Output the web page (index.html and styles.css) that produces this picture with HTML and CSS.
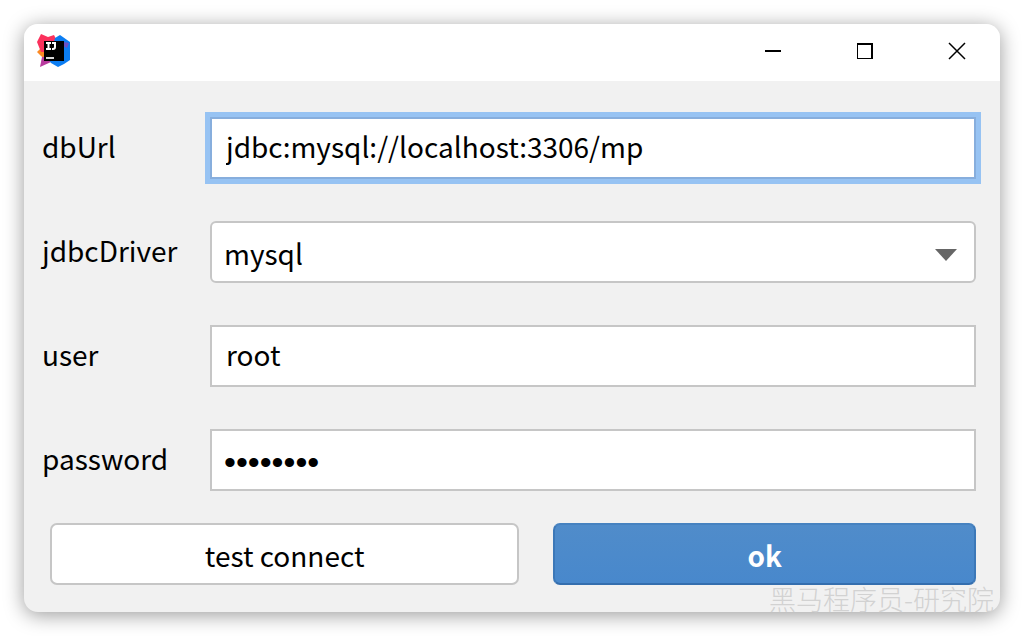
FILE: index.html
```html
<!DOCTYPE html>
<html lang="en">
<head>
<meta charset="utf-8">
<meta name="viewport" content="width=device-width, initial-scale=1">
<title>Database connection</title>
<link rel="stylesheet" href="styles.css">
</head>
<body>
<main class="dialog">
  <header class="titlebar">
    <svg class="app-icon" viewBox="0 0 34 34" aria-hidden="true">
      <path fill="#fc8a24" d="M5 13 0 18l4 4 5 4V14z"/>
      <path fill="#b83b9e" d="M5 23 3 33l11-5 3-6z"/>
      <path fill="#fb315c" d="M4 0 0 8l4 10h12l4-11-3-6-6 2z"/>
      <path fill="#0b7df2" d="m23 1 10 7v18l-6 4-6 3-7-4-2-3 6-22z"/>
      <path fill="#6a52c4" d="m27 8 5 1-2 5-4-2z"/>
      <path fill="#000" d="M7 7h20v20H7z"/>
      <path fill="none" stroke="#fff" stroke-width="2" d="M9 9h5M11.500 9v6M9 15h5M15 9h4M18 9v4q0 2-2 2h-1"/>
      <path fill="#d8d8d8" d="M9 23h8v2H9z"/>
    </svg>
    <div class="window-controls">
      <button class="window-button" type="button" aria-label="Minimize"><svg viewBox="0 0 18 18"><path fill="none" stroke="#000" stroke-width="2" d="M1 9h16"/></svg></button>
      <button class="window-button" type="button" aria-label="Maximize"><svg viewBox="0 0 18 18"><path fill="#000" fill-rule="evenodd" d="M1 1h16v16H1zM2 3v13h13V3z"/></svg></button>
      <button class="window-button" type="button" aria-label="Close"><svg viewBox="0 0 18 18"><path fill="none" stroke="#000" stroke-width="1.500" d="m1 1 16 16M17 1 1 17"/></svg></button>
    </div>
  </header>
  <form class="form">
    <div class="fields">
      <label class="label" for="db-url">dbUrl</label>
      <input class="field field-active" id="db-url" type="text" value="jdbc:mysql://localhost:3306/mp" spellcheck="false">
      <label class="label" for="driver">jdbcDriver</label>
      <div class="select-wrap">
        <select class="field field-select" id="driver"><option>mysql</option></select>
        <svg class="arrow" viewBox="0 0 22 12" aria-hidden="true"><path fill="#666" d="M0 0h22L11 12z"/></svg>
      </div>
      <label class="label" for="user">user</label>
      <input class="field" id="user" type="text" value="root" spellcheck="false">
      <label class="label" for="password">password</label>
      <input class="field field-password" id="password" type="password" value="password">
    </div>
    <div class="actions">
      <button class="button button-test" type="button">test connect</button>
      <button class="button button-ok" type="submit">ok</button>
    </div>
  </form>
  <span class="watermark" lang="zh">黑马程序员-研究院</span>
</main>
</body>
</html>
```
FILE: styles.css
```css
* {
  box-sizing: border-box;
}

body {
  margin: 0;
  padding: 24px;
  background: #fff;
  color: #000;
  font-family: "Noto Sans CJK SC", "Noto Sans", sans-serif;
  font-size: 28px;
  line-height: 42px;
}

.dialog {
  position: relative;
  border-radius: 14px;
  background: #f1f1f1;
  box-shadow: 0 3px 20px rgba(0, 0, 0, 0.4);
}

.titlebar {
  display: flex;
  align-items: center;
  justify-content: space-between;
  height: 57px;
  padding: 0 26px 4px 13px;
  border-radius: 14px 14px 0 0;
  background: #fff;
}

.app-icon {
  width: 34px;
  height: 34px;
}

.window-controls {
  display: flex;
  gap: 58px;
}

.window-button {
  display: flex;
  padding: 8px;
  border: 0;
  background: none;
}

.window-button svg {
  width: 18px;
  height: 18px;
}

.form {
  padding: 36px 24px 27px 18px;
}

.fields {
  display: grid;
  grid-template-columns: 168px 1fr;
  row-gap: 42px;
  align-items: center;
}

.label {
  padding-bottom: 4px;
}

.field {
  display: block;
  width: 100%;
  height: 62px;
  padding: 0 14px 4px;
  border: 2px solid #c6c6c6;
  border-radius: 0;
  outline: 0;
  background: #fff;
  color: #000;
  font: inherit;
}

.field-active {
  border-color: #87aedd;
  box-shadow: 0 0 0 5px #97c3f3;
}

.field-password {
  padding: 4px 12px 0;
  font-family: "Liberation Sans", Arial, sans-serif;
  font-size: 34px;
}

.select-wrap {
  position: relative;
}

.field-select {
  appearance: none;
  padding: 2px 12px 0;
  border-radius: 6px;
}

.arrow {
  position: absolute;
  top: 28px;
  right: 19px;
  width: 22px;
  height: 12px;
  pointer-events: none;
}

.actions {
  display: flex;
  gap: 34px;
  margin-top: 32px;
  padding-left: 8px;
}

.button {
  height: 62px;
  padding: 2px 0 0;
  border: 2px solid #c6c6c6;
  border-radius: 7px;
  background: #fff;
  color: #000;
  font: inherit;
}

.button-test {
  flex: 10 1 0;
}

.button-ok {
  flex: 9 1 0;
  border-color: #4682c0 #3c78b8 #346eae;
  background: linear-gradient(#508cca, #4888cc);
  color: #fff;
  font-weight: 700;
}

.watermark {
  position: absolute;
  right: 6px;
  bottom: 0;
  color: #d2d2d2;
  font-size: 27px;
  font-weight: 300;
  line-height: 27px;
  pointer-events: none;
}
```
